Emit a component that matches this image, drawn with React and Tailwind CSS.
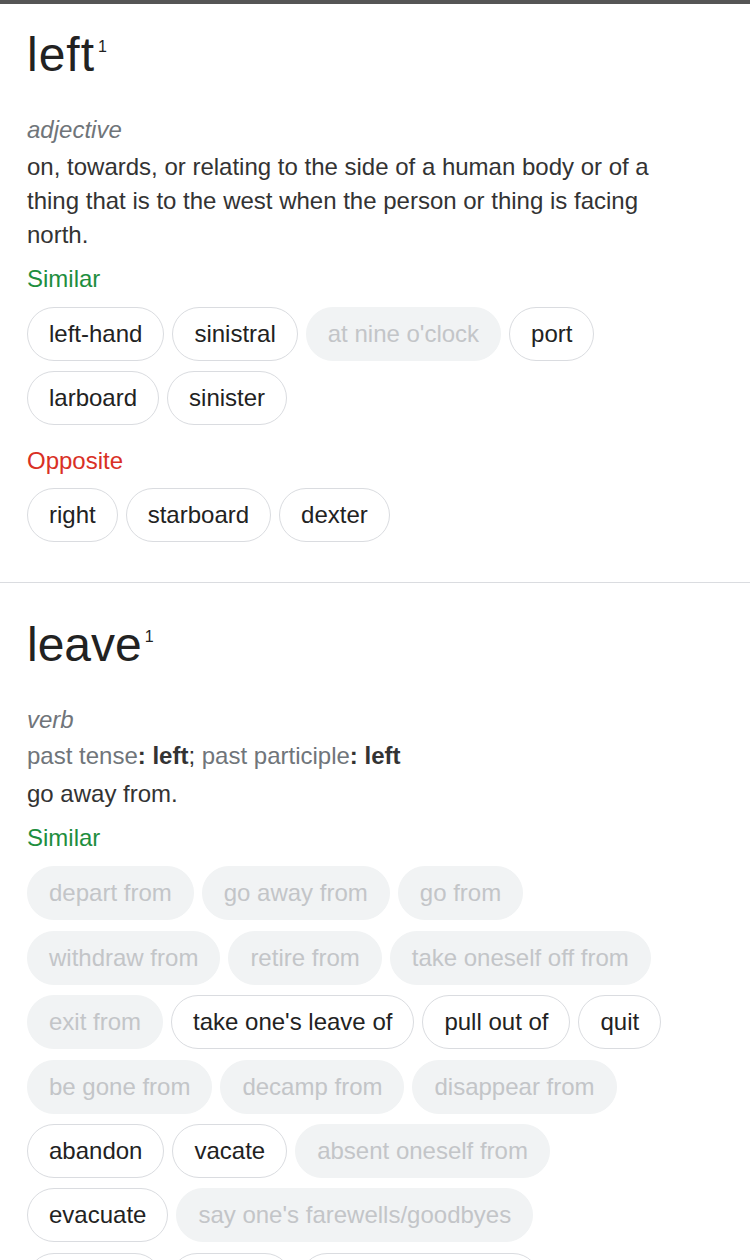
import React from "react";

const font = { fontFamily: '"Liberation Sans", Arial, sans-serif' };

function Chip({ word, off }) {
  if (off) {
    return (
      <span className="inline-flex h-[54px] items-center rounded-full border border-[#f1f3f4] bg-[#f1f3f4] px-[21px] text-[24px] text-[#c3c5c8]">
        {word}
      </span>
    );
  }
  return (
    <span className="inline-flex h-[54px] items-center rounded-full border border-[#dadce0] bg-white px-[21px] text-[24px] text-[#222]">
      {word}
    </span>
  );
}

function Chips({ items }) {
  return (
    <div className="flex w-[640px] flex-wrap gap-x-[8px] gap-y-[10.4px]">
      {items.map(([w, off]) => (
        <Chip key={w} word={w} off={off} />
      ))}
    </div>
  );
}

function Title({ word, wide }) {
  return (
    <div className={`flex items-start text-[48px] leading-[56px] text-[#222] ${wide ? "tracking-[1px]" : ""}`}>
      <span>{word}</span>
      <span className="ml-[3px] mt-[11px] text-[16px] leading-[18px] tracking-normal">1</span>
    </div>
  );
}

const leftSimilar = [
  ["left-hand"],
  ["sinistral"],
  ["at nine o'clock", true],
  ["port"],
  ["larboard"],
  ["sinister"],
];

const leftOpposite = [["right"], ["starboard"], ["dexter"]];

const leaveSimilar = [
  ["depart from", true],
  ["go away from", true],
  ["go from", true],
  ["withdraw from", true],
  ["retire from", true],
  ["take oneself off from", true],
  ["exit from", true],
  ["take one's leave of"],
  ["pull out of"],
  ["quit"],
  ["be gone from", true],
  ["decamp from", true],
  ["disappear from", true],
  ["abandon"],
  ["vacate"],
  ["absent oneself from", true],
  ["evacuate"],
  ["say one's farewells/goodbyes", true],
  ["abscond"],
  ["forsake"],
  ["turn one's back on"],
];

export default function App() {
  return (
    <div className="h-[1260px] w-[750px] overflow-hidden bg-white" style={font}>
      <div className="h-[4px] bg-[#555]" />

      {/* left */}
      <section className="px-[27px] pb-[40px] pt-[23px]">
        <Title word="left" wide />
        <div className="mt-[30px] text-[24px] italic leading-[34px] text-[#70757a]">adjective</div>
        <p className="mt-[3px] w-[650px] text-[24px] leading-[34px] text-[#333]">
          on, towards, or relating to the side of a human body or of a thing that is to the west when the person or thing is facing north.
        </p>
        <div className="mt-[10px] text-[24px] leading-[34px] text-[#1e8e3e]">Similar</div>
        <div className="mt-[11px]">
          <Chips items={leftSimilar} />
        </div>
        <div className="mt-[19px] text-[24px] leading-[34px] text-[#d93025]">Opposite</div>
        <div className="mt-[10px]">
          <Chips items={leftOpposite} />
        </div>
      </section>

      <div className="h-px bg-[#dadce0]" />

      {/* leave */}
      <section className="px-[27px] pt-[34px]">
        <Title word="leave" />
        <div className="mt-[30px] text-[24px] italic leading-[34px] text-[#70757a]">verb</div>
        <div className="mt-[2px] text-[24px] leading-[34px] text-[#333]">
          <span className="text-[#70757a]">past tense</span>
          <span className="font-bold">: left</span>
          <span>; </span>
          <span className="text-[#70757a]">past participle</span>
          <span className="font-bold">: left</span>
        </div>
        <p className="mt-[4px] text-[24px] leading-[34px] text-[#333]">go away from.</p>
        <div className="mt-[10px] text-[24px] leading-[34px] text-[#1e8e3e]">Similar</div>
        <div className="mt-[11px]">
          <Chips items={leaveSimilar} />
        </div>
      </section>
    </div>
  );
}
